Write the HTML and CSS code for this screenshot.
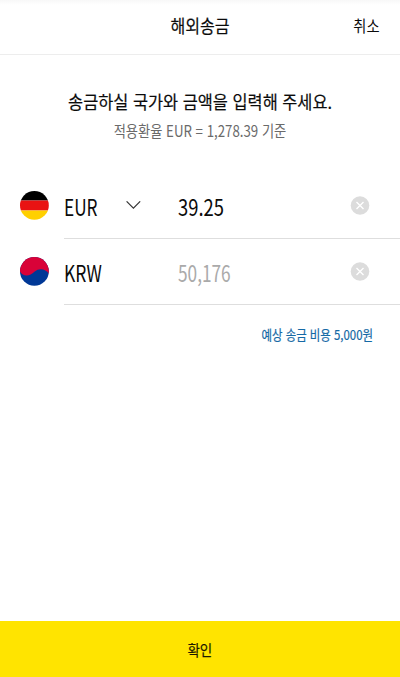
FILE: index.html
```html
<!DOCTYPE html>
<html lang="ko">
<head>
<meta charset="utf-8">
<title>해외송금</title>
<link rel="stylesheet" href="styles.css">
</head>
<body>
<div class="screen">
  <header class="header">
    <h1 class="title"><span class="narrow">해외송금</span></h1>
    <span class="cancel narrow">취소</span>
  </header>
  <main class="content">
    <p class="headline"><span class="narrow">송금하실 국가와 금액을 입력해 주세요.</span></p>
    <p class="rate"><span class="narrow">적용환율 EUR = 1,278.39 기준</span></p>
    <div class="row">
      <svg class="flag" viewBox="0 0 30 30">
        <clipPath id="disc"><circle cx="15.400" cy="14.400" r="14.400"/></clipPath>
        <g clip-path="url(#disc)">
          <path fill="#000" d="M0 0h30v9.500H0z"/>
          <path fill="#e91313" d="M0 9.500h30v10H0z"/>
          <path fill="#ffd000" d="M0 19.500h30V30H0z"/>
        </g>
      </svg>
      <div class="field">
        <span class="code eur narrow">EUR</span>
        <svg class="chevron" viewBox="0 0 16 10"><path d="M.6.3l6.800 6.800L14.200.3"/></svg>
        <span class="amount narrow">39.25</span>
        <svg class="clear" viewBox="0 0 20 20"><circle cx="10" cy="9.500" r="9.300"/><path d="m6.500 6 7 7m0-7-7 7"/></svg>
      </div>
    </div>
    <div class="row">
      <svg class="flag" viewBox="0 0 30 30">
        <g clip-path="url(#disc)">
          <path fill="#003896" d="M0 0h30v30H0z"/>
          <path fill="#d90238" d="M0 0h30v17C26.500 11.500 20 11 15.400 14.800 11 19.500 4 20 1 14.500L0 12z"/>
        </g>
      </svg>
      <div class="field">
        <span class="code krw narrow">KRW</span>
        <span class="chevron"></span>
        <span class="amount muted narrow">50,176</span>
        <svg class="clear" viewBox="0 0 20 20"><circle cx="10" cy="9.500" r="9.300"/><path d="m6.500 6 7 7m0-7-7 7"/></svg>
      </div>
    </div>
    <p class="fee"><span class="narrow">예상 송금 비용 5,000원</span></p>
  </main>
  <button class="confirm"><span class="narrow">확인</span></button>
</div>
</body>
</html>
```
FILE: styles.css
```css
* { box-sizing: border-box; }
body { margin: 0; background: #fff; color: #0b0b0b; font-family: "Noto Sans CJK KR", sans-serif; }
h1, p { margin: 0; }
.screen { height: 677px; display: flex; flex-direction: column; overflow: hidden; }
.narrow { display: inline-block; white-space: nowrap; transform: scaleX(var(--sx)); }
.header {
  height: 55px; flex: none; display: grid; grid-template-columns: 1fr auto 1fr; align-items: center;
  border-bottom: 1px solid #ededed; background: linear-gradient(#f8f8f8, #fff 5px);
  padding: 0 20px 5px;
}
.title { grid-column: 2; font-size: 18.500px; line-height: 26px; font-weight: 400; --sx: .87; -webkit-text-stroke: .2px; }
.cancel { justify-self: end; font-size: 15.500px; line-height: 24px; --sx: .92; transform-origin: right; }
.content { flex: 1; display: flex; flex-direction: column; }
.headline { margin-top: 33px; text-align: center; font-size: 18px; line-height: 26px; --sx: .91; -webkit-text-stroke: .2px; }
.rate { margin-top: 5px; text-align: center; font-size: 15.500px; line-height: 22px; color: #6a6a6a; --sx: .855; }
.row { display: flex; align-items: center; height: 66px; padding-left: 19px; }
.rate + .row { margin-top: 32px; }
.flag { width: 30px; height: 30px; margin-right: 15px; flex: none; }
.field { flex: 1; height: 66px; display: flex; align-items: center; border-bottom: 1px solid #dedede; }
.code { width: 62px; font-size: 23px; line-height: 30px; transform-origin: left; }
.eur { --sx: .75; }
.krw { --sx: .76; }
.chevron { width: 16px; height: 10px; margin-right: 36px; flex: none; }
.chevron path { fill: none; stroke: #333; stroke-width: 1.1; }
.amount { width: 172px; font-size: 23px; line-height: 30px; transform-origin: left; --sx: .8; }
.muted { color: #aaa; --sx: .75; }
.clear { width: 20px; height: 20px; flex: none; }
.clear circle { fill: #dcdcdc; }
.clear path { stroke: #fff; stroke-width: 1.400; fill: none; }
.fee { margin-top: 19px; padding-right: 27px; text-align: right; font-size: 13.500px; line-height: 20px; color: #1569a5; --sx: .845; -webkit-text-stroke: .2px; }
.fee .narrow { transform-origin: right; }
.confirm {
  height: 56px; flex: none; border: 0; padding: 2px 0 0; background: #ffe400; color: #1c1900;
  font: 400 15px/24px "Noto Sans CJK KR", sans-serif; --sx: .9; -webkit-text-stroke: .2px;
}
```
